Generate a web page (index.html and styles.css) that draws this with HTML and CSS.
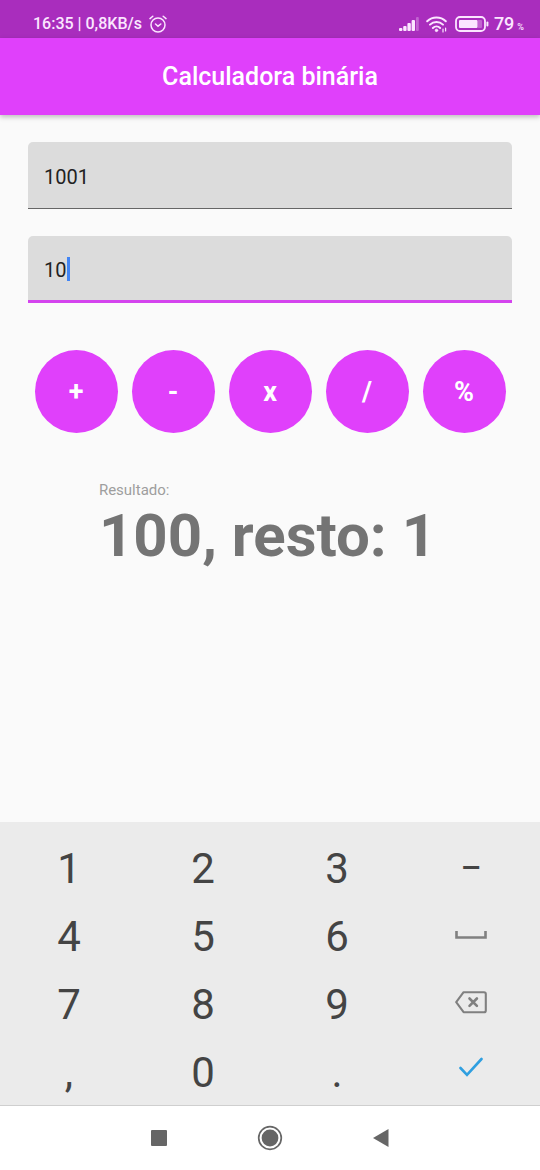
FILE: index.html
```html
<!DOCTYPE html>
<html lang="pt-BR">
<head>
<meta charset="utf-8">
<meta name="viewport" content="width=device-width, initial-scale=1">
<title>Calculadora binária</title>
<link rel="stylesheet" href="styles.css">
</head>
<body>
<div class="screen">
  <div class="status">
    <div class="status-group">
      <span>16:35 | 0,8KB/s</span>
      <svg width="18" height="18" viewBox="0 0 18 18" fill="none" stroke="currentColor" stroke-width="1.5" stroke-linecap="round" aria-hidden="true">
        <circle cx="9" cy="10" r="7"/>
        <path d="M1 3.6 3.8 1.2M17 3.6 14.2 1.2M6.5 9 9 11.2 11.8 9"/>
      </svg>
    </div>
    <div class="status-group">
      <svg width="20" height="16" viewBox="0 0 20 16" fill="currentColor" aria-hidden="true">
        <rect x="0" y="12" width="3.4" height="3" rx="1"/>
        <rect x="4.2" y="10" width="3.4" height="5" rx="1"/>
        <rect x="8.4" y="7" width="3.4" height="8" rx="1"/>
        <rect x="12.6" y="4" width="3.4" height="11" rx="1"/>
        <rect x="17" y="1" width="2.8" height="14" rx="1" opacity=".3"/>
      </svg>
      <svg width="22" height="18" viewBox="0 0 22 18" fill="none" stroke="currentColor" stroke-width="2" stroke-linecap="round" aria-hidden="true">
        <path d="M1.2 6.2a13.5 13.5 0 0 1 18.6 0M4 9.6a9.4 9.4 0 0 1 13 0M6.9 13a5.2 5.2 0 0 1 7.2 0"/>
        <circle cx="10.5" cy="15.4" r="1.2" fill="currentColor" stroke-width="1"/>
        <path d="M17 14v3M19.6 13v3" stroke-width="1.2"/>
      </svg>
      <svg width="34" height="16" viewBox="0 0 34 16" fill="none" aria-hidden="true">
        <rect x="1" y="1" width="29" height="14" rx="4" stroke="currentColor" stroke-width="1.8"/>
        <rect x="4" y="4" width="18.5" height="8" rx="1" fill="currentColor"/>
        <rect x="22.5" y="4" width="4.5" height="8" rx="1" fill="currentColor" opacity=".3"/>
        <path d="M32.4 6.5v3" stroke="currentColor" stroke-width="2" stroke-linecap="round"/>
      </svg>
      <span class="level">79<small>%</small></span>
    </div>
  </div>
  <header class="appbar"><h1>Calculadora binária</h1></header>
  <main class="content">
    <div class="field">
      <input type="text" inputmode="numeric" aria-label="Primeiro número" value="1001">
    </div>
    <div class="field active">
      <input type="text" inputmode="numeric" aria-label="Segundo número" value="10">
      <span class="caret" aria-hidden="true"></span>
    </div>
    <div class="operators">
      <button type="button">+</button>
      <button type="button">-</button>
      <button type="button">x</button>
      <button type="button">/</button>
      <button type="button">%</button>
    </div>
    <div class="result">
      <span class="result-label">Resultado:</span>
      <output class="result-value">100, resto: 1</output>
    </div>
  </main>
  <div class="keyboard">
    <button type="button">1</button>
    <button type="button">2</button>
    <button type="button">3</button>
    <button type="button" class="dash">–</button>
    <button type="button">4</button>
    <button type="button">5</button>
    <button type="button">6</button>
    <button type="button" class="icon-key" aria-label="Espaço">
      <svg width="32" height="26" viewBox="0 0 32 26" fill="none" stroke="currentColor" stroke-width="2.6"><path d="M1.5 8v6.5h29V8"/></svg>
    </button>
    <button type="button">7</button>
    <button type="button">8</button>
    <button type="button">9</button>
    <button type="button" class="icon-key" aria-label="Apagar">
      <svg width="32" height="28" viewBox="0 0 32 28" fill="none" stroke="currentColor" stroke-width="2.1" stroke-linejoin="round" stroke-linecap="round"><path d="M8.6 2.2H29a1.8 1.8 0 0 1 1.8 1.8v16.4a1.8 1.8 0 0 1-1.8 1.8H8.6L1.2 12.2Z"/><path stroke-width="2.6" d="m14.5 8.5 7.4 7.4m0-7.4-7.4 7.4"/></svg>
    </button>
    <button type="button">,</button>
    <button type="button">0</button>
    <button type="button">.</button>
    <button type="button" class="icon-key confirm" aria-label="Confirmar">
      <svg width="24" height="30" viewBox="0 0 24 30" fill="none" stroke="currentColor" stroke-width="2.6" stroke-linecap="round"><path d="m1.5 11 6.5 6.8L22.5 2"/></svg>
    </button>
  </div>
  <nav class="navbar">
    <button type="button" aria-label="Recentes">
      <svg width="16" height="16" viewBox="0 0 16 16" fill="currentColor"><rect width="16" height="16" rx="1"/></svg>
    </button>
    <button type="button" aria-label="Início">
      <svg width="26" height="26" viewBox="0 0 26 26"><circle cx="13" cy="13" r="11.3" fill="none" stroke="currentColor" stroke-width="1.7"/><circle cx="13" cy="13" r="8.4" fill="currentColor"/></svg>
    </button>
    <button type="button" aria-label="Voltar">
      <svg width="18" height="20" viewBox="0 0 18 20" fill="currentColor"><path d="M16.5 1v18L1 10Z"/></svg>
    </button>
  </nav>
</div>
</body>
</html>
```
FILE: styles.css
```css
* {
  box-sizing: border-box;
}

body {
  margin: 0;
  background: #fafafa;
  font-family: Roboto, "Liberation Sans", sans-serif;
}

button {
  display: flex;
  align-items: center;
  justify-content: center;
  padding: 0;
  border: 0;
  background: none;
  color: inherit;
  font: inherit;
}

.screen {
  display: flex;
  flex-direction: column;
  min-height: 100vh;
}

.status {
  display: flex;
  justify-content: space-between;
  align-items: flex-end;
  height: 38px;
  padding: 0 16px 4px 33px;
  background: #a92dbd;
  color: #fbe6ff;
  font-size: 16px;
  font-weight: 500;
  line-height: 20px;
}

.status-group {
  display: flex;
  align-items: center;
  gap: 7px;
}

.level {
  display: flex;
  align-items: baseline;
  gap: 3px;
  margin-left: -2px;
  font-size: 18px;
}

.level small {
  font-size: 9px;
  line-height: 9px;
}

.appbar {
  display: flex;
  align-items: center;
  justify-content: center;
  height: 77px;
  background: #e040fb;
  color: #fff;
  box-shadow: 0 2px 5px rgba(0, 0, 0, 0.25);
}

.appbar h1 {
  margin: 0;
  font-size: 25px;
  font-weight: 500;
}

.content {
  flex: 1;
  padding: 27px 28px;
}

.field {
  position: relative;
  margin-bottom: 27px;
}

.field input {
  display: block;
  width: 100%;
  height: 67px;
  padding: 3px 16px 0;
  border: 0;
  border-bottom: 1px solid #666;
  border-radius: 5px 5px 0 0;
  outline: 0;
  background: #dcdcdc;
  color: #222;
  font: inherit;
  font-size: 20px;
}

.field.active input {
  border-bottom: 3px solid #d444ee;
}

.caret {
  position: absolute;
  top: 21px;
  left: 39px;
  width: 3px;
  height: 24px;
  background: #4285f4;
}

.operators {
  display: flex;
  justify-content: center;
  gap: 14px;
  margin-top: 47px;
}

.operators button {
  width: 83px;
  height: 83px;
  border-radius: 50%;
  background: #e040fb;
  color: #fff;
  font-size: 27px;
  font-weight: 700;
}

.result {
  display: flex;
  flex-direction: column;
  width: max-content;
  margin: 47px auto 0;
  padding-right: 5px;
}

.result-label {
  color: #9e9e9e;
  font-size: 15px;
  line-height: 20px;
}

.result-value {
  color: #747474;
  font-size: 60px;
  font-weight: 700;
  line-height: 71px;
}

.keyboard {
  display: grid;
  grid-template-columns: repeat(4, 1fr);
  grid-auto-rows: 62px;
  row-gap: 6px;
  padding: 15px 2px 2px;
  background: #ebebeb;
  border-bottom: 1px solid #cfcfcf;
  color: #444;
  font-size: 42px;
}

.dash {
  font-size: 32px;
  font-weight: 500;
}

.icon-key {
  color: #808080;
}

.icon-key.confirm {
  color: #2f9fe0;
}

.navbar {
  display: flex;
  align-items: center;
  justify-content: center;
  gap: 1px;
  height: 64px;
  background: #fff;
  color: #666;
}

.navbar button {
  width: 110px;
  height: 48px;
}
```
